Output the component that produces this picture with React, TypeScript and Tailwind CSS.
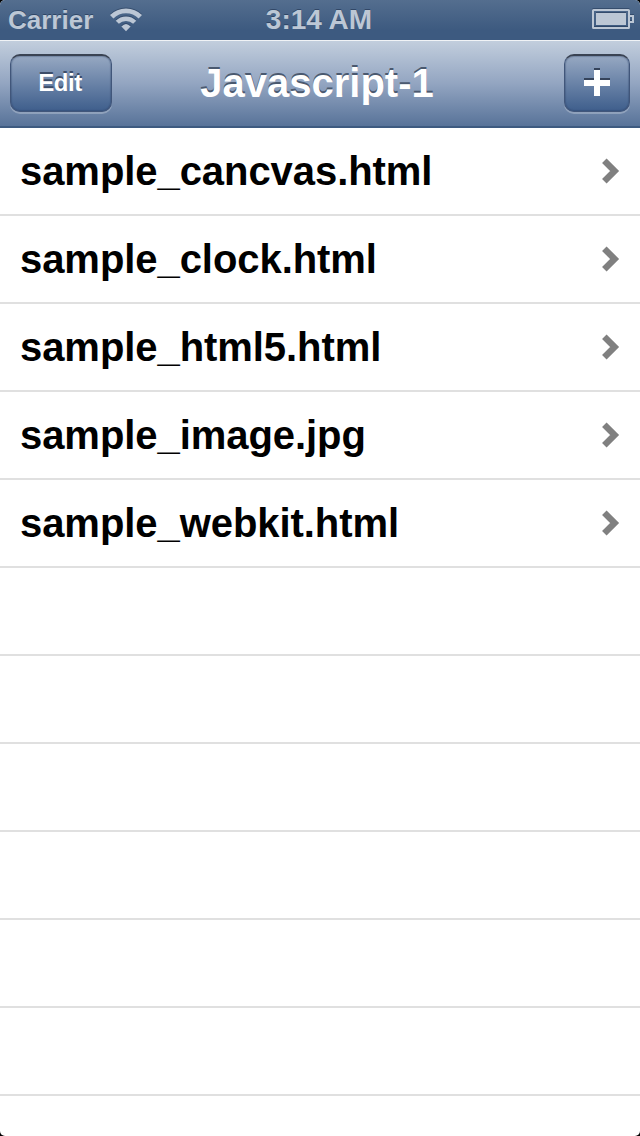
const files = [
  "sample_cancvas.html",
  "sample_clock.html",
  "sample_html5.html",
  "sample_image.jpg",
  "sample_webkit.html",
];

const EMPTY_ROWS = 6;

const WifiIcon = () => (
  <svg
    className="ml-[17px] h-6 w-8 drop-shadow-[0_-1px_0_rgba(30,50,80,0.5)]"
    viewBox="0 0 32 24"
    fill="none"
    stroke="#bcc7d5"
  >
    <path d="M1.7 8.7 A20.3 20.3 0 0 1 30.3 8.7" strokeWidth="4.8" />
    <path d="M7.3 14.3 A12.3 12.3 0 0 1 24.7 14.3" strokeWidth="4.4" />
    <path d="M16 23.2 L11.4 18.4 Q16 13.4 20.6 18.4 Z" fill="#bcc7d5" stroke="none" />
  </svg>
);

const BatteryIcon = () => (
  <svg
    className="mb-[2px] h-5 w-[42px] drop-shadow-[0_-1px_0_rgba(30,50,80,0.5)]"
    viewBox="0 0 42 20"
    fill="none"
  >
    <rect x="1" y="1" width="36" height="18" rx="0.5" stroke="#bcc7d5" strokeWidth="2" />
    <rect x="4" y="4" width="30" height="12" fill="#bcc7d5" />
    <path d="M38 7 H41 V13 H38" stroke="#bcc7d5" strokeWidth="2" />
  </svg>
);

const PlusIcon = () => (
  <svg className="mb-[3px] h-7 w-[26px]" viewBox="0 0 26 28">
    <path d="M10 0h6v10h10v6H16v10h-6V16H0v-6h10z" fill="#35435a" />
    <path d="M10 2h6v10h10v6H16v10h-6V18H0v-6h10z" fill="#fff" />
  </svg>
);

const Chevron = () => (
  <svg className="h-[26px] w-[18px]" viewBox="0 0 18 26" fill="none">
    <path d="M2.3 2.7 L12.6 13 L2.3 23.3" stroke="#808080" strokeWidth="6.4" />
  </svg>
);

const StatusBar = () => (
  <div className="grid h-10 grid-cols-3 items-center bg-gradient-to-b from-[#546e8f] to-[#3d5a80] to-75% pl-2 pr-[6px] text-[26px] font-bold text-[#bcc7d5] [text-shadow:0_-1px_0_rgba(30,50,80,0.6)]">
    <div className="flex items-center">
      <span>Carrier</span>
      <WifiIcon />
    </div>
    <span className="pr-1 text-center text-[28px] leading-10">3:14 AM</span>
    <div className="flex justify-end">
      <BatteryIcon />
    </div>
  </div>
);

const buttonStyle =
  "flex h-[58px] items-center justify-center rounded-[10px] border border-[#41567a] border-t-2 border-t-[#3a4353] bg-gradient-to-b from-[#9aabc4] to-[#3d5d8b] bg-origin-border text-white shadow-[inset_0_0_1px_1px_rgba(40,60,95,0.3),0_2px_0_rgba(255,255,255,0.25)]";

const NavBar = () => (
  <div className="grid h-[88px] grid-cols-[102px_1fr_66px] items-start border-b-2 border-t border-b-[#3d5a80] border-t-[#f0f3f6] bg-gradient-to-b from-[#c2cedd] via-[#93a5c1] to-[#587399] px-[10px] pt-[13px]">
    <button
      className={`${buttonStyle} pb-[2px] pr-[2px] text-2xl font-bold tracking-[-0.4px] [text-shadow:0_-2px_0_#3c4d68]`}
    >
      Edit
    </button>
    <h1 className="mt-[9px] pr-[42px] text-center text-[40px] font-bold leading-none text-white [text-shadow:0_-2px_0_#4a596f]">
      Javascript-1
    </h1>
    <button className={buttonStyle} aria-label="Add">
      <PlusIcon />
    </button>
  </div>
);

export default function App() {
  return (
    <div className="h-[1136px] w-[640px] overflow-hidden bg-black font-['Liberation_Sans',Arial,sans-serif]">
      <div className="h-full overflow-hidden rounded-[5px] bg-white">
        <StatusBar />
        <NavBar />
        <ul>
          {files.map((file) => (
            <li
              key={file}
              className="flex h-[88px] items-center justify-between border-b-2 border-[#e0e0e0] px-5"
            >
              <span className="text-[40px] font-bold leading-none tracking-[-0.06px] text-black">
                {file}
              </span>
              <Chevron />
            </li>
          ))}
          {Array.from({ length: EMPTY_ROWS }, (_, i) => (
            <li key={i} className="h-[88px] border-b-2 border-[#e0e0e0]" />
          ))}
        </ul>
      </div>
    </div>
  );
}
